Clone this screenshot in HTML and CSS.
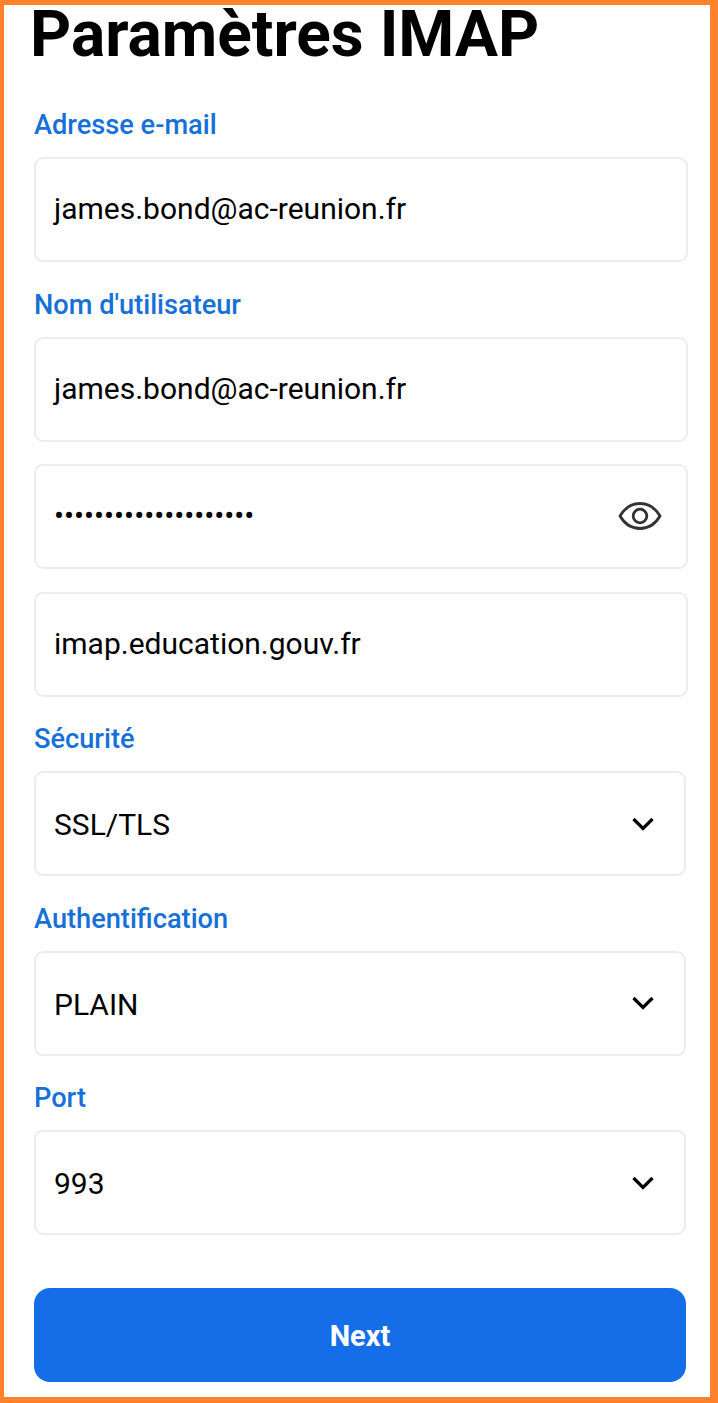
FILE: index.html
```html
<!DOCTYPE html>
<html>
<head>
    <meta charset="UTF-8">
    <title>Paramètres IMAP</title>
    <link rel="stylesheet" href="styles.css">
</head>
<body>
    <div class="frame">
        <h1 class="title">Paramètres IMAP</h1>
        <form class="form">
            <label class="label">Adresse e-mail</label>
            <div class="field">james.bond@ac-reunion.fr</div>
            <label class="label">Nom d'utilisateur</label>
            <div class="field">james.bond@ac-reunion.fr</div>
            <div class="field field-gap">
                <span class="dots">••••••••••••••••••••</span>
                <svg class="eye" viewBox="0 0 44 30" fill="none" stroke="#333" stroke-width="2.8" stroke-linejoin="round">
                    <path d="M2 15C7 6.500 14 2.500 22 2.500S37 6.500 42 15C37 23.500 30 27.500 22 27.500S7 23.500 2 15Z"/>
                    <circle cx="22" cy="15" r="6.800"/>
                </svg>
            </div>
            <div class="field field-gap">imap.education.gouv.fr</div>
            <label class="label">Sécurité</label>
            <div class="field select">SSL/TLS
                <svg class="chev" viewBox="0 0 22 14" fill="none" stroke="#000" stroke-width="3.200"><path d="M1.500 2L11 11.500L20.500 2"/></svg>
            </div>
            <label class="label">Authentification</label>
            <div class="field select">PLAIN
                <svg class="chev" viewBox="0 0 22 14" fill="none" stroke="#000" stroke-width="3.200"><path d="M1.500 2L11 11.500L20.500 2"/></svg>
            </div>
            <label class="label">Port</label>
            <div class="field select">993
                <svg class="chev" viewBox="0 0 22 14" fill="none" stroke="#000" stroke-width="3.200"><path d="M1.500 2L11 11.500L20.500 2"/></svg>
            </div>
            <button class="next" type="button">Next</button>
        </form>
    </div>
</body>
</html>
```

FILE: styles.css
```css
*{margin: 0;padding: 0;box-sizing: border-box;}
html,body{
    height: 100%;
    background-color: #fff;
}
body{
    font-family: Roboto, "Liberation Sans", sans-serif;
    color: #000;
}
.frame{
    height: 1403px;
    border-style: solid;
    border-color: #ff822d;
    border-width: 5px 8px 6px 4px;
}
.title{
    height: 77.500px;
    padding-left: 26px;
    font-size: 64px;
    line-height: 60px;
    font-weight: 700;
}
.form{
    display: flex;
    flex-direction: column;
    padding-left: 30px;
}
.label{
    display: flex;
    align-items: center;
    height: 74.500px;
    padding-top: 11px;
    font-size: 27.200px;
    font-weight: 500;
    color: #1570d8;
}
.field{
    display: flex;
    align-items: center;
    justify-content: space-between;
    width: 654px;
    height: 105px;
    padding: 0 26px 2px 18px;
    border: 2px solid #ececec;
    border-radius: 9px;
    font-size: 30px;
}
.field-gap{
    margin-top: 22.600px;
}
.select{
    width: 652px;
    padding-top: 2px;
    padding-bottom: 0;
}
.dots{
    font-size: 29.700px;
    letter-spacing: 0;
}
.eye{
    width: 44px;
    height: 30px;
    margin: 1px -2px 0 0;
}
.chev{
    width: 22px;
    height: 14px;
    margin: 0 4px 2px 0;
}
.next{
    width: 652px;
    height: 94px;
    margin-top: 53px;
    padding-top: 2px;
    border: 0;
    border-radius: 16px;
    background-color: #156de8;
    color: #fff;
    font-family: inherit;
    font-size: 29px;
    font-weight: 700;
}
```
